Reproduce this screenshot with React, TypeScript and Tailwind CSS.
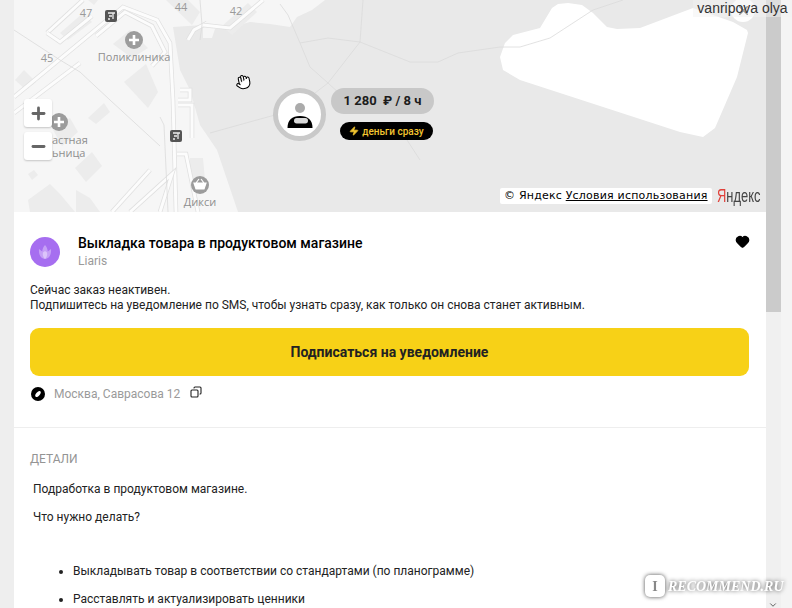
import React from 'react';
import { Copy, Hand, Heart, Plus, Minus, Zap, X, ChevronDown } from 'lucide-react';

const BUILDINGS = [
  '60,33 83,13 92,22 68,40',
  '88,0 98,0 94,5',
  '15,80 24,70 36,82 26,90',
  '113,44 130,30 148,48 132,58',
  '124,82 146,64 158,92 148,108',
  '88,118 104,103 110,112 96,124',
  '52,128 70,118 78,132 62,146',
  '75,168 92,152 102,166 86,182',
  '28,174 34,170 38,175 32,180',
  '28,200 50,184 60,194 75,212 30,212',
  '76,190 90,198 100,212 76,212',
  '190,158 203,158 205,180 190,180',
  '222,26 248,3 257,12 232,35',
  '166,0 188,0 200,12 192,25',
];

const ROADS = [
  '14,97 123,7 157,20 170,43 173,100 176,212',
  '47,33 83,0',
  '47,33 60,42 92,16',
  '96,36 125,12 152,26 165,52 152,66',
  '14,113 80,63',
  '180,90 190,90 190,100 178,100',
  '178,105 192,105 192,138',
  '177,154 186,154 198,212',
  '207,23 194,30 188,40',
  '203,25 230,28 263,0',
  '160,212 172,174 130,212',
  '112,212 150,170',
];

const THIN_LINES = [
  '200,40 202,25 200,0',
  '280,4 288,15 300,43 310,67 328,83 340,94',
  '300,43 328,38 360,42 363,0',
  '360,42 328,83 315,93',
  '360,42 410,62 438,62 458,53 500,47 520,47 550,38 593,10 623,0',
  '14,30 60,60 80,72',
  '210,133 264,118 275,115',
  '407,140 420,160',
  '80,72 110,100 160,146',
  '160,117 164,125 168,212',
];

const MapPoi = ({ x, y, label }: { x: number; y: number; label: string }) => (
  <g>
    <circle cx={x} cy={y} r={9} fill="#9c9c9c" />
    <path d={`M${x - 5} ${y}h10M${x} ${y - 5}v10`} stroke="#fff" strokeWidth={2.6} />
    <text x={x} y={y + 21} textAnchor="middle" fontSize={11} fill="#8f8f8f" fontFamily="Open Sans, sans-serif">
      {label}
    </text>
  </g>
);

const Transit = ({ x, y }: { x: number; y: number }) => (
  <g>
    <rect x={x - 6} y={y - 6} width={12} height={12} rx={2} fill="#555" />
    <path d={`M${x - 3} ${y - 3}h7M${x - 2} ${y}h3M${x + 2} ${y - 3}v6M${x - 3} ${y + 3}h2`} stroke="#eee" strokeWidth={1.3} fill="none" />
  </g>
);

const MapDrawing = () => (
  <svg viewBox="14 0 752 212" className="absolute inset-0 h-full w-full">
    <rect x={14} y={0} width={752} height={212} fill="#e9e9e9" />
    <polygon
      fill="#f6f6f6"
      points="14,0 325,0 312,10 297,17 290,27 270,24 250,22 232,27 215,29 212,38 203,38 203,25 173,27 180,70 190,90 200,125 217,150 238,212 14,212"
    />
    <polygon
      fill="#ffffff"
      points="500,57 505,43 513,35 540,28 552,8 558,4 568,3 582,5 593,13 607,27 617,29 640,28 693,8 733,22 747,30 748,33 737,77 715,128 703,137 680,132 520,80 503,70"
    />
    {BUILDINGS.map((points) => (
      <polygon key={points} points={points} fill="#ececec" />
    ))}
    {ROADS.map((points) => (
      <g key={points}>
        <polyline points={points} fill="none" stroke="#e0e0e0" strokeWidth={4.5} />
        <polyline points={points} fill="none" stroke="#fcfcfc" strokeWidth={3} />
      </g>
    ))}
    {THIN_LINES.map((points) => (
      <polyline key={points} points={points} fill="none" stroke="#dadada" strokeWidth={0.8} />
    ))}
    <g fontSize={11} fill="#9a9a9a" fontFamily="Open Sans, sans-serif" textAnchor="middle">
      <text x={86} y={17}>47</text>
      <text x={181} y={11}>44</text>
      <text x={236} y={15}>42</text>
      <text x={47} y={62}>45</text>
    </g>
    <MapPoi x={134} y={40} label="Поликлиника" />
    <circle cx={59} cy={122} r={9} fill="#9c9c9c" />
    <path d="M54 122h10M59 117v10" stroke="#fff" strokeWidth={2.6} />
    <g fontSize={11} fill="#8f8f8f" fontFamily="Open Sans, sans-serif">
      <text x={52} y={144}>астная</text>
      <text x={52} y={157}>ьница</text>
    </g>
    <Transit x={111} y={16} />
    <Transit x={176} y={136} />
    <circle cx={200} cy={185} r={9} fill="#9c9c9c" />
    <path d="M194 183h12l-2 6h-8zM196 183l3-4M204 183l-3-4" stroke="#fff" strokeWidth={1.2} fill="#fff" />
    <text x={200} y={206} textAnchor="middle" fontSize={11} fill="#8f8f8f" fontFamily="Open Sans, sans-serif">Дикси</text>
  </svg>
);

const ZoomButton = ({ children }: { children: React.ReactNode }) => (
  <div className="flex h-7 w-7 items-center justify-center rounded-[3px] bg-white shadow-[0_1px_2px_rgba(0,0,0,0.2)]">
    {children}
  </div>
);

const MapBlock = () => (
  <div className="relative h-[212px] overflow-hidden">
    <MapDrawing />

    <div className="absolute left-[10px] top-[99px] flex flex-col gap-[5px]">
      <ZoomButton>
        <Plus size={19} strokeWidth={3.5} className="text-[#666]" />
      </ZoomButton>
      <ZoomButton>
        <Minus size={19} strokeWidth={3.5} className="text-[#666]" />
      </ZoomButton>
    </div>

    <Hand size={16} strokeWidth={1.6} fill="#fff" className="absolute left-[221px] top-[74px] -rotate-12 text-black" />

    {/* marker */}
    <div className="absolute left-[259px] top-[88px] flex h-[53px] w-[53px] items-center justify-center rounded-full border-[5px] border-[#c9c9c9] bg-white">
      <svg width="30" height="34" viewBox="0 0 30 34">
        <circle cx="15" cy="10" r="5" fill="#ababab" />
        <path d="M2.500 30c0-8 4.500-12 12.500-12s12.500 4 12.500 12z" fill="#000" />
        <rect x="9" y="20" width="14" height="5.500" rx="2.700" fill="#d9d9d9" />
      </svg>
    </div>
    <div className="absolute left-[317px] top-[88px] flex h-[26px] w-[103px] items-center justify-center rounded-full bg-[#c8c8c8] text-[13px] font-bold whitespace-pre text-[#1c1c1c]">
      1 280  ₽ / 8 ч
    </div>
    <div className="absolute left-[326px] top-[122px] flex h-[18px] w-[93px] items-center justify-center gap-[3px] rounded-full bg-black text-[10px] font-medium text-[#f3c530]">
      <Zap size={10} fill="#f3c530" />
      деньги сразу
    </div>

    {/* attribution */}
    <div className="absolute left-[486px] top-[188px] flex h-4 items-center rounded-[2px] bg-white px-1 font-['DejaVu_Sans',sans-serif] text-[11px] tracking-[0.2px] whitespace-nowrap text-black">
      © Яндекс&nbsp;<span className="underline">Условия использования</span>
    </div>
    <div className="absolute left-[703px] top-[184px] origin-left scale-x-[0.68] font-['Liberation_Sans',sans-serif] text-[19px] leading-6 whitespace-nowrap text-[#444]">
      <span className="text-[#e0403a]">Я</span>ндекс
    </div>

    <div className="absolute -top-[2px] left-[717px] flex h-6 w-6 items-center justify-center rounded-full bg-white">
      <X size={15} strokeWidth={2.6} className="text-[#444]" />
    </div>
  </div>
);

const Compass = () => (
  <svg width="14" height="14" viewBox="0 0 14 14">
    <circle cx="7" cy="7" r="7" fill="#000" />
    <ellipse cx="7" cy="7" rx="1.8" ry="3.6" transform="rotate(40 7 7)" fill="#fff" />
  </svg>
);

const Logo = () => (
  <div className="flex h-[30px] w-[30px] items-center justify-center rounded-full bg-[#a66ef0]">
    <svg width="18" height="18" viewBox="0 0 18 18">
      <path d="M9 16C4.500 16 2.500 11 3 6l3.200 2.400C6.500 6 7.500 3.500 9 2c1.500 1.500 2.500 4 2.800 6.400L15 6c.5 5-1.500 10-6 10z" fill="#c6a0f6" />
      <path d="M9 16c-1.800-1.500-2.500-4-2-6.500L9 8l2 1.500c.5 2.500-.2 5-2 6.500z" fill="#dcc4fa" />
    </svg>
  </div>
);

const Details = () => (
  <div className="px-4 pt-[23px] text-[12px] text-[#222]">
    <div className="text-[12px] leading-4 text-[#949494]">ДЕТАЛИ</div>
    <p className="mt-[15px] ml-[3px] leading-[14px]">Подработка в продуктовом магазине.</p>
    <p className="mt-[14px] ml-[3px] leading-[14px]">Что нужно делать?</p>
    <ul className="mt-[40px] ml-[31px] flex list-disc flex-col gap-[14px] pl-[12px] leading-[14px]">
      <li>Выкладывать товар в соответствии со стандартами (по планограмме)</li>
      <li>Расставлять и актуализировать ценники</li>
    </ul>
  </div>
);

const App: React.FC = () => {
  return (
    <div className="relative flex h-[608px] w-[792px] overflow-hidden bg-[#eeeeee] font-[Roboto,sans-serif]">
      <div className="w-[14px] shrink-0" />

      <main className="w-[752px] shrink-0 bg-white">
        <MapBlock />

        <div className="flex items-start px-4 pt-[25px]">
          <Logo />
          <div className="-mt-[2px] ml-[18px] flex-1">
            <h1 className="text-[14px] leading-4 font-medium text-black">Выкладка товара в продуктовом магазине</h1>
            <div className="mt-[2px] text-[12px] leading-4 text-[#9a9a9a]">Liaris</div>
          </div>
          <Heart size={15} fill="#000" className="-mt-[3px] text-black" />
        </div>

        <div className="mt-[14px] px-4 text-[12px] leading-[15px] text-[#222]">
          <p>Сейчас заказ неактивен.</p>
          <p>Подпишитесь на уведомление по SMS, чтобы узнать сразу, как только он снова станет активным.</p>
        </div>

        <div className="pt-[15px] pr-[17px] pl-4">
          <button className="flex h-[48px] w-full items-center justify-center rounded-[9px] bg-[#f7d117] text-[14px] font-bold text-[#222]">
            Подписаться на уведомление
          </button>
        </div>

        <div className="flex items-center border-b border-[#eeeeee] px-4 pt-[10px] pb-[25px]">
          <span className="ml-[1px]"><Compass /></span>
          <span className="ml-[9px] text-[12px] leading-4 text-[#9a9a9a]">Москва, Саврасова 12</span>
          <Copy size={12} strokeWidth={2.2} className="mb-[4px] ml-[10px] -scale-x-100 text-[#222]" />
        </div>

        <Details />
      </main>

      <div className="w-[15px] shrink-0 bg-[#f0f0f0]">
        <div className="h-[312px] bg-[#cbcbcb]" />
      </div>
      <div className="w-[11px] shrink-0 bg-[#f4f4f4]" />

      {/* screenshot overlays */}
      <div className="absolute top-0 right-0 flex h-[17px] w-[99px] items-center justify-center bg-[#f2f2f2]/50 font-['Liberation_Sans',sans-serif] text-[14px] whitespace-nowrap text-[#333]">
        vanripova olya
      </div>
      <ChevronDown size={10} className="absolute top-[600px] left-[768px] text-[#444]" />

      <div className="absolute top-[575px] left-[645px] flex items-center gap-[3px] drop-shadow-[0_0_2px_rgba(0,0,0,0.7)]">
        <div className="flex h-[22px] w-[20px] items-center justify-center rounded-[5px] bg-white font-['Liberation_Serif',serif] text-[14px] font-bold text-[#888]">
          I
        </div>
        <span className="font-['Liberation_Serif',serif] text-[14px] font-bold whitespace-nowrap text-white italic">
          RECOMMEND.RU
        </span>
      </div>
    </div>
  );
};

export default App;
